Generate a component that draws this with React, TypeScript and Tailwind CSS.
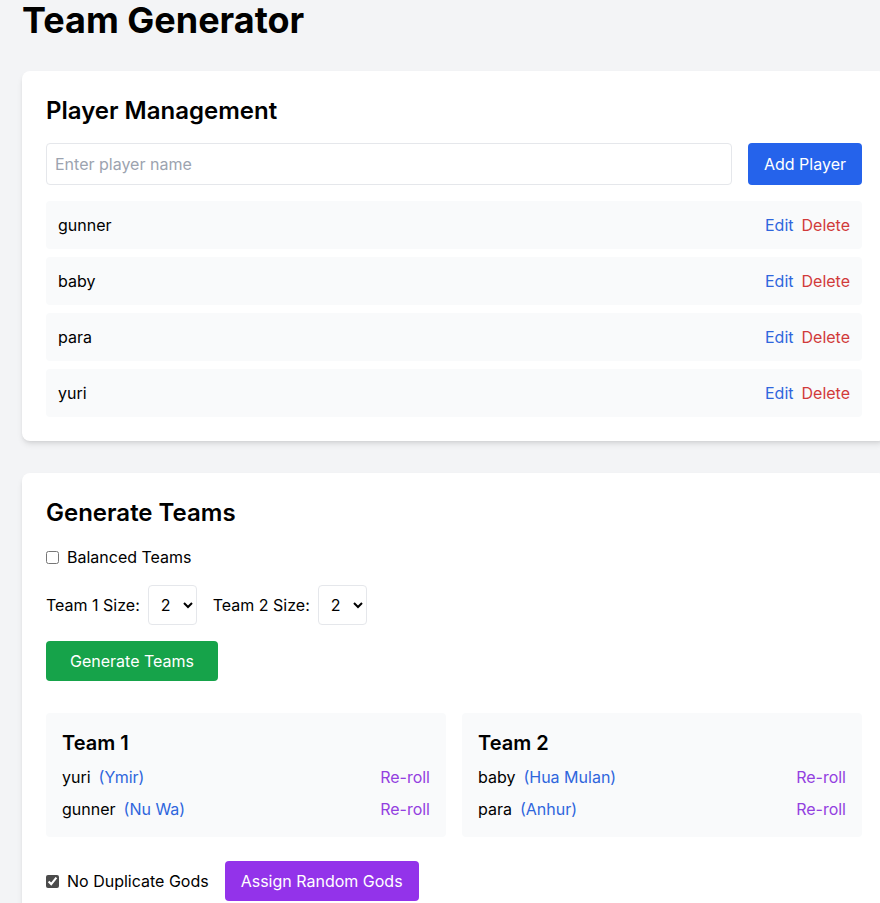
import React from 'react';

const players = ['gunner', 'baby', 'para', 'yuri'];

const teams = [
  {
    name: 'Team 1',
    members: [
      { player: 'yuri', god: 'Ymir' },
      { player: 'gunner', god: 'Nu Wa' },
    ],
  },
  {
    name: 'Team 2',
    members: [
      { player: 'baby', god: 'Hua Mulan' },
      { player: 'para', god: 'Anhur' },
    ],
  },
];

function SizeSelect() {
  return (
    <select
      defaultValue="2"
      className="h-10 w-[49px] rounded border border-[#e5e7eb] bg-white p-2 text-base text-black"
    >
      <option value="1">1</option>
      <option value="2">2</option>
      <option value="3">3</option>
    </select>
  );
}

export default function App() {
  return (
    <div
      className="h-[903px] w-[880px] overflow-hidden bg-[#f3f4f6] text-black"
      style={{ fontFamily: 'Inter, "Noto Sans", sans-serif' }}
    >
      <div className="w-[886px] pl-[22px]">
        <h1 className="mb-[31px] text-4xl leading-10 font-bold">Team Generator</h1>

        {/* players */}
        <div className="mb-8 rounded-lg bg-white p-6 shadow-md">
          <h2 className="mb-4 text-2xl leading-8 font-semibold">Player Management</h2>
          <div className="mb-4 flex gap-4">
            <input
              type="text"
              placeholder="Enter player name"
              className="h-[42px] flex-1 rounded border border-[#e5e7eb] px-2 text-base placeholder:text-[#9ca3af]"
            />
            <button className="h-[42px] rounded bg-[#2563eb] px-4 text-base text-white">Add Player</button>
          </div>
          <div className="flex flex-col gap-2">
            {players.map((p) => (
              <div key={p} className="flex items-center justify-between rounded bg-[#f9fafb] p-3 text-base leading-6">
                <span>{p}</span>
                <div className="flex gap-2">
                  <button className="text-[#2f66dd]">Edit</button>
                  <button className="text-[#d13a3a]">Delete</button>
                </div>
              </div>
            ))}
          </div>
        </div>

        {/* teams */}
        <div className="rounded-lg bg-white p-6 shadow-md">
          <h2 className="mb-4 text-2xl leading-8 font-semibold">Generate Teams</h2>
          <label className="mb-4 flex items-center text-base leading-6">
            <input type="checkbox" className="m-0 h-[13px] w-[13px]" />
            <span className="ml-2">Balanced Teams</span>
          </label>
          <div className="mb-4 flex items-center text-base">
            <span className="mr-2">Team 1 Size:</span>
            <SizeSelect />
            <span className="mr-2 ml-4">Team 2 Size:</span>
            <SizeSelect />
          </div>
          <button className="h-10 rounded bg-[#16a34a] px-6 text-base text-white">Generate Teams</button>

          <div className="mt-8 grid grid-cols-2 gap-4">
            {teams.map((t) => (
              <div key={t.name} className="rounded bg-[#f9fafb] p-4">
                <h3 className="mb-2 text-xl leading-7 font-semibold">{t.name}</h3>
                <div className="flex flex-col gap-2">
                  {t.members.map((m) => (
                    <div key={m.player} className="flex items-center justify-between text-base leading-6">
                      <span>
                        {m.player}
                        <span className="ml-2 text-[#2f66dd]">({m.god})</span>
                      </span>
                      <button className="text-[#9340e0]">Re-roll</button>
                    </div>
                  ))}
                </div>
              </div>
            ))}
          </div>

          <div className="mt-6 flex items-center text-base">
            <label className="flex items-center leading-6">
              <input type="checkbox" defaultChecked className="m-0 h-[13px] w-[13px] accent-[#4b4b4b]" />
              <span className="ml-2">No Duplicate Gods</span>
            </label>
            <button className="ml-4 h-10 rounded bg-[#9333ea] px-4 text-base text-white">Assign Random Gods</button>
          </div>
        </div>
      </div>
    </div>
  );
}
